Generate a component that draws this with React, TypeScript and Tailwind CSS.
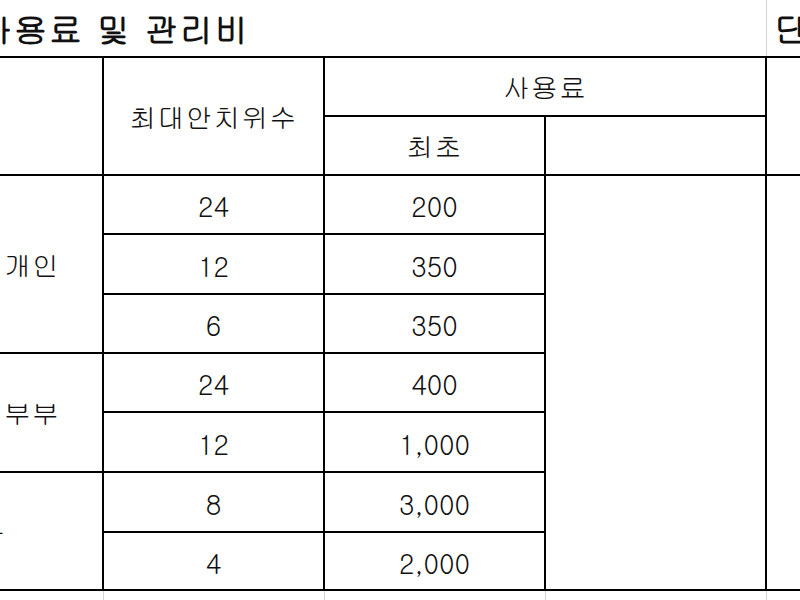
const groups = [
  { label: '개인', rows: [['24', '200'], ['12', '350'], ['6', '350']] },
  { label: '부부', rows: [['24', '400'], ['12', '1,000']] },
  { label: '회사', rows: [['8', '3,000'], ['4', '2,000']], cut: true },
];

const rowHeights = ['h-[59px]', 'h-[60px]', 'h-[59px]', 'h-[59px]', 'h-[60px]', 'h-[60px]', 'h-[58px]'];

const font = "font-['Gulim','Noto_Sans_CJK_KR',sans-serif]";

export default function App() {
  let idx = 0;
  return (
    <div className={`w-[800px] h-[600px] overflow-hidden bg-white text-[#111] ${font}`}>
      <table className="ml-[-42px] table-fixed border-collapse w-[1007px] text-[27px] leading-none">
        <colgroup>
          <col className="w-[144px]" />
          <col className="w-[221px]" />
          <col className="w-[221px]" />
          <col className="w-[221px]" />
          <col className="w-[200px]" />
        </colgroup>
        <tbody>
          {/* title row */}
          <tr className="h-[57px]">
            <td colSpan={4} className="border-r border-[#d4d4d4] pl-[20px] text-left align-middle text-[33px] font-bold tracking-[2px] whitespace-nowrap">
              사용료 및 관리비
            </td>
            <td className="pl-[8px] text-left align-middle text-[33px] font-bold whitespace-nowrap">단위 : 만원</td>
          </tr>

          {/* header rows */}
          <tr className="h-[59px]">
            <td rowSpan={2} className="border-2 border-black" />
            <td rowSpan={2} className="border-2 border-black text-center align-middle tracking-[1px]">최대안치위수</td>
            <td colSpan={2} className="border-2 border-black text-center align-middle tracking-[1px]">사용료</td>
            <td rowSpan={2} className="border-2 border-black" />
          </tr>
          <tr className="h-[59px]">
            <td className="border-2 border-black text-center align-middle tracking-[1px]">최초</td>
            <td className="border-2 border-black" />
          </tr>

          {/* data rows */}
          {groups.map((g) =>
            g.rows.map((r, i) => {
              const h = rowHeights[idx];
              const first = idx === 0;
              idx++;
              return (
                <tr key={g.label + i} className={h}>
                  {i === 0 && (
                    <td rowSpan={g.rows.length} className="border-2 border-black align-middle tracking-[1px] whitespace-nowrap">
                      {g.cut ? (
                        <div className="flex justify-end pr-[96px]">
                          <span className="shrink-0">{g.label}</span>
                        </div>
                      ) : (
                        <div className="text-center pl-[2px]">{g.label}</div>
                      )}
                    </td>
                  )}
                  <td className="border-2 border-black text-center align-middle pt-[2px]">{r[0]}</td>
                  <td className="border-2 border-black text-center align-middle pt-[2px]">{r[1]}</td>
                  {first && <td rowSpan={7} className="border-2 border-black" />}
                  {first && <td rowSpan={7} className="border-2 border-black" />}
                </tr>
              );
            })
          )}

          {/* sheet gridlines below the table */}
          <tr className="h-[20px]">
            <td className="border-r border-[#d4d4d4]" />
            <td className="border-r border-[#d4d4d4]" />
            <td className="border-r border-[#d4d4d4]" />
            <td className="border-r border-[#d4d4d4]" />
            <td />
          </tr>
        </tbody>
      </table>
    </div>
  );
}
